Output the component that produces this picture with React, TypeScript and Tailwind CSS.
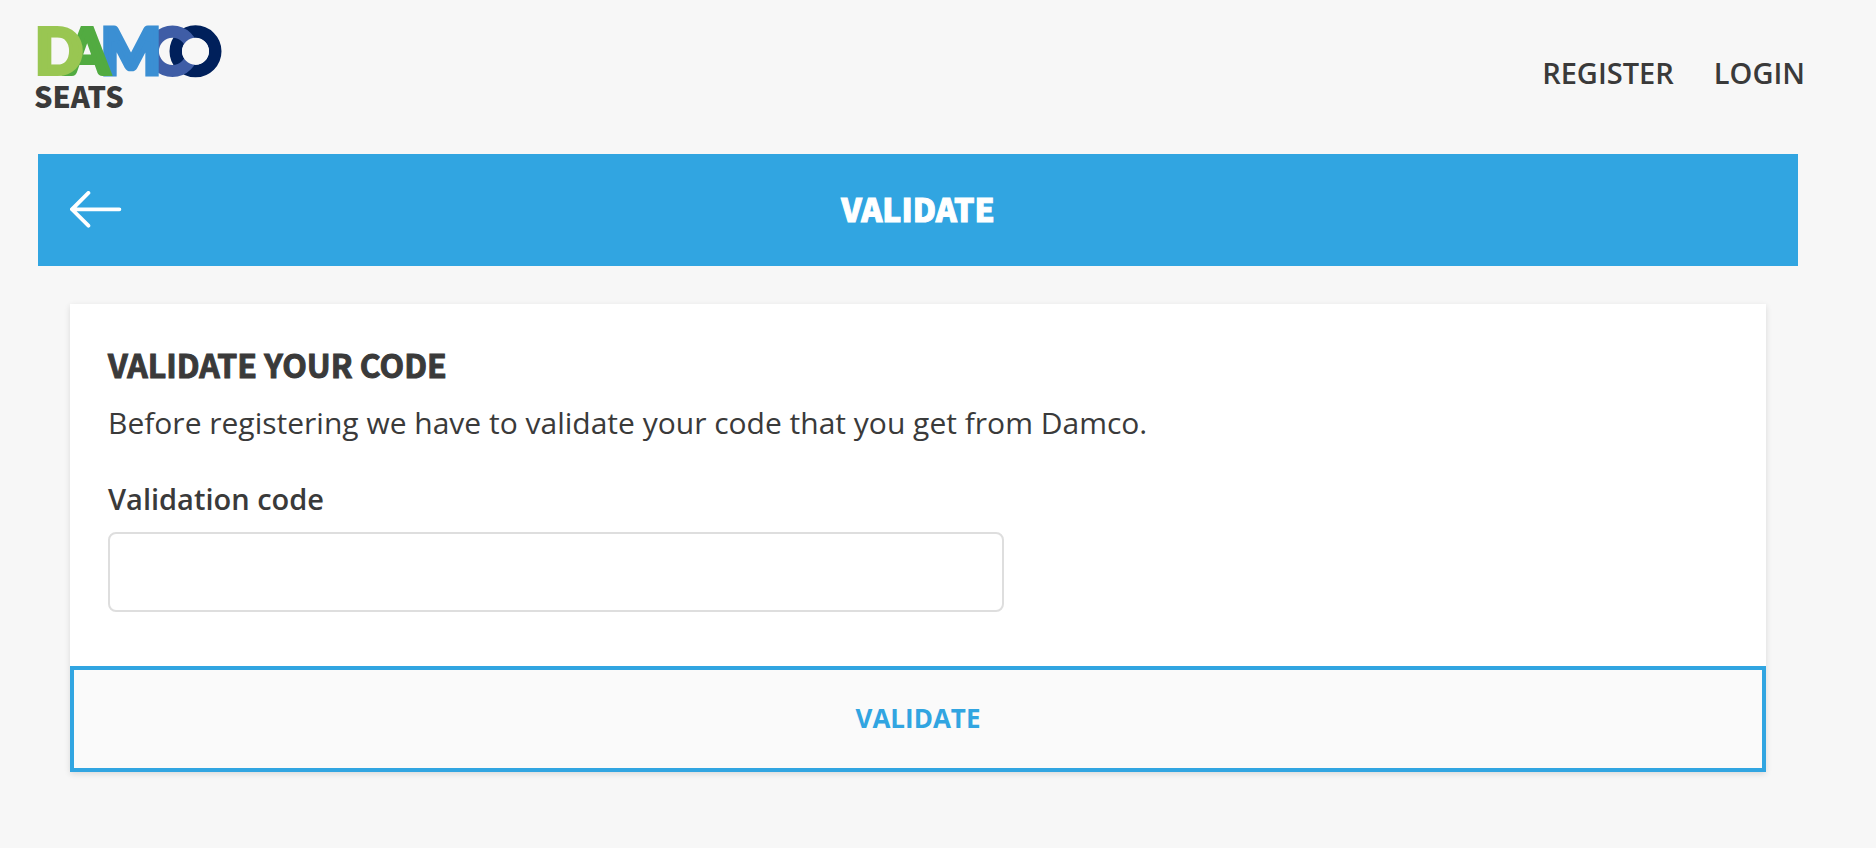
import type { ReactNode } from "react";

function DamcoLogo() {
  return (
    <svg
      width="190"
      height="56"
      viewBox="-2 0 190 56"
      role="img"
      aria-label="Damco"
      strokeMiterlimit="3"
      className="block overflow-visible font-['Lato',sans-serif] font-black"
    >
      <circle cx="159.5" cy="27.3" r="19.7" fill="none" stroke="#00205b" strokeWidth="12.6" />
      <circle cx="136.5" cy="27.3" r="19.7" fill="none" stroke="#3f5da6" strokeWidth="12.2" />
      <circle cx="159.5" cy="27.3" r="13.5" fill="#f7f7f7" />
      <text x="95" y="50" fontSize="63" textAnchor="middle" fill="#3b8fd3" stroke="#3b8fd3" strokeWidth="5">M</text>
      <text x="51" y="50" fontSize="63" textAnchor="middle" fill="#52ab41" stroke="#52ab41" strokeWidth="4">A</text>
      <text x="-1" y="50" fontSize="63" fill="#99c652" stroke="#99c652" strokeWidth="4">D</text>
    </svg>
  );
}

function BackArrow() {
  return (
    <svg width="52" height="38" viewBox="0 0 52 38" fill="none" stroke="#fff" strokeWidth="3.8" strokeLinecap="round" aria-hidden="true" className="block">
      <path d="M2 18.3H49.4M18.4 1.9L2 18.3L18.4 34.7" />
    </svg>
  );
}

function NavLink({ children }: { children: ReactNode }) {
  return (
    <a href="#" className="text-[29px] leading-10 font-semibold">
      {children}
    </a>
  );
}

export default function App() {
  return (
    <div className="min-h-screen bg-[#f7f7f7] pb-19 font-['Open_Sans',sans-serif] text-[#3a3a3a]">
      <header className="flex items-start justify-between pt-6 pr-[71px] pl-[34px]">
        <a href="#" className="flex flex-col">
          <DamcoLogo />
          <span className="font-['Noto_Sans_CJK_SC',sans-serif] text-[29px] leading-[30px] font-black">SEATS</span>
        </a>
        <nav className="flex gap-10 pt-[29px]">
          <NavLink>REGISTER</NavLink>
          <NavLink>LOGIN</NavLink>
        </nav>
      </header>

      <main className="mt-11 mr-[78px] ml-[38px]">
        <div className="grid h-28 grid-cols-[1fr_auto_1fr] items-center bg-[#31a5e1] px-8 text-white">
          <button type="button" aria-label="Back" className="justify-self-start">
            <BackArrow />
          </button>
          <h1 className="pb-1 font-['Noto_Sans_CJK_SC',sans-serif] text-[32px] leading-10 font-black [-webkit-text-stroke:1px_white]">VALIDATE</h1>
        </div>

        <form
          className="mx-8 mt-[38px] bg-white shadow-[0_2px_6px_rgba(0,0,0,0.12)]"
          onSubmit={(event) => event.preventDefault()}
        >
          <div className="px-[38px] pt-[38px] pb-[54px]">
            <h2 className="font-['Noto_Sans_CJK_SC',sans-serif] text-[32px] leading-11 font-bold [-webkit-text-stroke:1px_#3a3a3a]">VALIDATE YOUR CODE</h2>
            <p className="mt-[15px] text-[30px] leading-11">
              Before registering we have to validate your code that you get from Damco.
            </p>
            <label htmlFor="validation-code" className="mt-8 block text-[29px] leading-11 font-semibold">
              Validation code
            </label>
            <input
              id="validation-code"
              type="text"
              className="mt-[11px] block h-20 w-full max-w-4xl rounded-lg border-2 border-[#dedede] bg-white px-6 text-[30px] outline-none"
            />
          </div>
          <button
            type="submit"
            className="block h-[106px] w-full border-4 border-[#31a5e1] bg-[#fafafa] pb-[2px] text-[26px] leading-9 font-bold text-[#31a5e1]"
          >
            VALIDATE
          </button>
        </form>
      </main>
    </div>
  );
}
